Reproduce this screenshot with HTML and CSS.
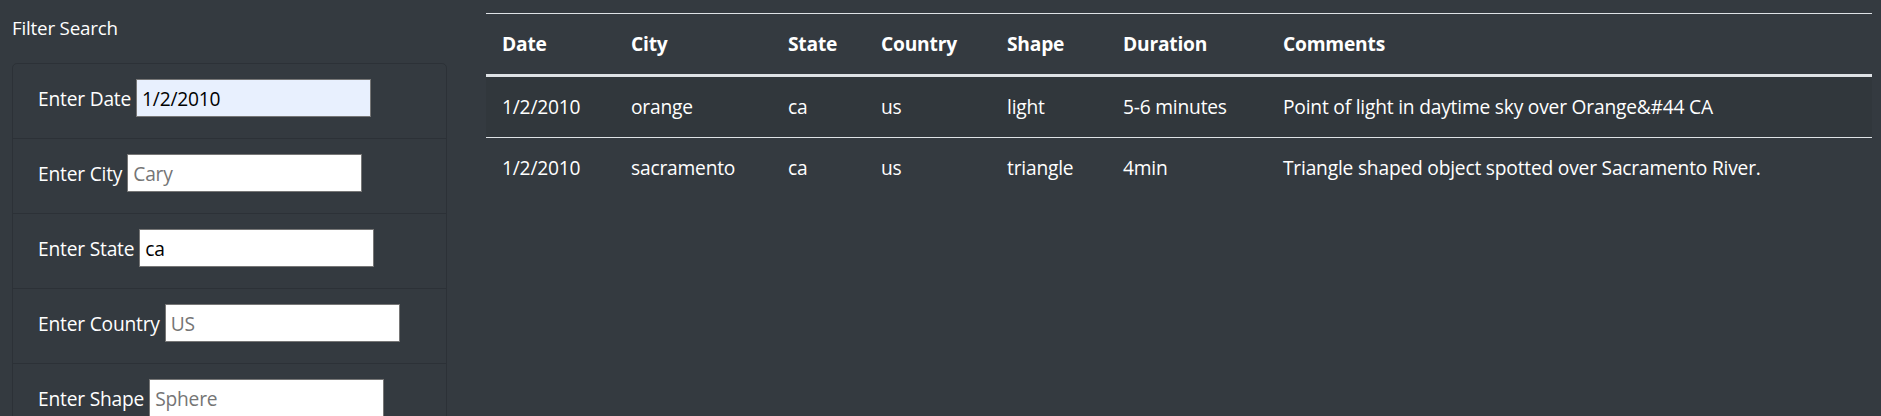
FILE: index.html
```html
<!DOCTYPE html>
<html lang="en">
<head>
<meta charset="utf-8">
<title>UFO Sightings</title>
<link rel="stylesheet" href="styles.css">
</head>
<body>
<div class="layout">
  <aside class="sidebar">
    <h5 class="sidebar-title">Filter Search</h5>
    <ul class="filters">
      <li class="filter"><label for="datetime">Enter Date</label> <input class="field autofilled" id="datetime" type="text" value="1/2/2010"></li>
      <li class="filter"><label for="city">Enter City</label> <input class="field" id="city" type="text" placeholder="Cary"></li>
      <li class="filter"><label for="state">Enter State</label> <input class="field" id="state" type="text" value="ca"></li>
      <li class="filter"><label for="country">Enter Country</label> <input class="field" id="country" type="text" placeholder="US"></li>
      <li class="filter"><label for="shape">Enter Shape</label> <input class="field" id="shape" type="text" placeholder="Sphere"></li>
    </ul>
  </aside>
  <main class="content">
    <table class="ufo-table">
      <thead>
        <tr>
          <th class="c-date">Date</th>
          <th class="c-city">City</th>
          <th class="c-state">State</th>
          <th class="c-country">Country</th>
          <th class="c-shape">Shape</th>
          <th class="c-duration">Duration</th>
          <th class="c-comments">Comments</th>
        </tr>
      </thead>
      <tbody>
        <tr>
          <td>1/2/2010</td><td>orange</td><td>ca</td><td>us</td><td>light</td><td>5-6 minutes</td><td>Point of light in daytime sky over Orange&amp;#44 CA</td>
        </tr>
        <tr>
          <td>1/2/2010</td><td>sacramento</td><td>ca</td><td>us</td><td>triangle</td><td>4min</td><td>Triangle shaped object spotted over Sacramento River.</td>
        </tr>
      </tbody>
    </table>
  </main>
</div>
</body>
</html>
```
FILE: styles.css
```css
html, body {
  margin: 0;
  padding: 0;
  overflow: hidden;
  background: #343a40;
}

body {
  font-family: "Open Sans", "Noto Sans", sans-serif;
  font-size: 19.2px;
  letter-spacing: -0.2px;
  color: #fff;
}

.layout {
  display: flex;
  gap: 39px;
  padding: 0 9px 0 12px;
}

.sidebar {
  flex: 0 0 435px;
}

.sidebar-title {
  margin: 0 0 22px;
  padding-top: 15px;
  font-size: 18.8px;
  font-weight: 400;
  line-height: 26px;
}

.filters {
  list-style: none;
  margin: 0;
  padding: 0;
  border: 1px solid rgba(0, 0, 0, 0.14);
  border-radius: 5px;
}

.filter {
  display: flex;
  align-items: baseline;
  gap: 5px;
  height: 74px;
  box-sizing: border-box;
  padding: 15px 25px 0;
}

.filter + .filter {
  border-top: 1px solid rgba(0, 0, 0, 0.14);
  height: 75px;
}

.filter label {
  line-height: 28px;
}

.field {
  width: 235px;
  height: 38px;
  box-sizing: border-box;
  padding: 0 5px;
  border: 1px solid #767676;
  border-radius: 0;
  background: #fff;
  color: #000;
  font-family: inherit;
  font-size: 19.2px;
  letter-spacing: -0.2px;
  outline: none;
}

.field::placeholder {
  color: #757575;
}

.field.autofilled {
  background: #e8f0fe;
}

.content {
  flex: 1;
  padding-top: 13px;
}

.ufo-table {
  width: 100%;
  table-layout: fixed;
  border-collapse: separate;
  border-spacing: 0;
}

.ufo-table th,
.ufo-table td {
  box-sizing: border-box;
  padding: 16px 16px;
  line-height: 28px;
  text-align: left;
  white-space: nowrap;
}

.ufo-table th {
  font-weight: 700;
  border-top: 1px solid #dee2e6;
  border-bottom: 3px solid #dee2e6;
}

.ufo-table tbody tr:nth-child(odd) {
  background: rgba(0, 0, 0, 0.05);
}

.ufo-table tbody tr + tr td {
  border-top: 1px solid #dee2e6;
}

.c-date { width: 129px; }
.c-city { width: 157px; }
.c-state { width: 93px; }
.c-country { width: 126px; }
.c-shape { width: 116px; }
.c-duration { width: 160px; }
```
